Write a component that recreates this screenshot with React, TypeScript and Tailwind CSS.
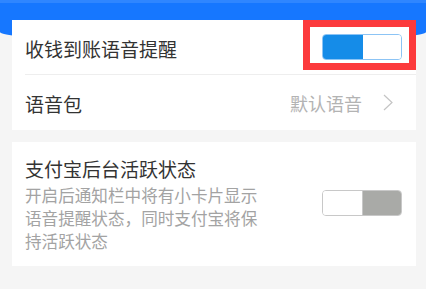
import React from "react";

const font = { fontFamily: '"Noto Sans CJK SC", "Noto Sans", sans-serif' };

export default function App() {
  return (
    <div className="relative w-[426px] h-[289px] overflow-hidden bg-[#f5f5f5]" style={font}>
      <div className="h-[42px] bg-[#1677ff] rounded-b-[50%_10px] border-t-[3px] border-t-[#2f86ff]" />
      <div className="ml-[12px] mr-[10px] -mt-[22px] relative">
        <div className="bg-white">
          <div className="h-[54px] flex items-center justify-between pl-[13px] pr-[14px]">
            <span className="text-[19px] text-[#333333] leading-[26px] mt-[3px]">收钱到账语音提醒</span>
            <div className="w-[80px] h-[26px] flex rounded-[4px] overflow-hidden border border-[#8cc4f5]">
              <div className="w-[40px] bg-[#158ce8]" />
              <div className="flex-1 bg-white" />
            </div>
          </div>
          <div className="ml-[13px] h-px bg-[#eeeeee]" />
          <div className="h-[55px] flex items-center justify-between pl-[13px] pr-[23px]">
            <span className="text-[19px] text-[#333333] leading-[26px] mt-[3px]">语音包</span>
            <div className="flex items-center gap-[21px]">
              <span className="text-[18px] text-[#b3b3b3] leading-[26px]">默认语音</span>
              <svg width="10" height="17" viewBox="0 0 10 17" fill="none">
                <path d="M1 1 L9 8.5 L1 16" stroke="#c4c4c4" strokeWidth="1.2" />
              </svg>
            </div>
          </div>
        </div>
        <div className="mt-[12px] bg-white h-[124px] flex items-center justify-between pl-[13px] pr-[14px]">
          <div className="flex flex-col">
            <span className="text-[19px] text-[#333333] leading-[26px]">支付宝后台活跃状态</span>
            <span className="text-[16.6px] text-[#a3a3a3] leading-[23px] mt-[2px]">
              开启后通知栏中将有小卡片显示
              <br />
              语音提醒状态，同时支付宝将保
              <br />
              持活跃状态
            </span>
          </div>
          <div className="w-[80px] h-[26px] flex rounded-[4px] overflow-hidden border border-[#c8c8c8] self-center -mt-[2px]">
            <div className="w-[40px] bg-white border-r border-[#c8c8c8]" />
            <div className="flex-1 bg-[#a9aaa7]" />
          </div>
        </div>
      </div>
      <div className="absolute left-[303px] top-[20px] w-[113px] h-[50px] border-[7px] border-[#fc3a3c]" />
    </div>
  );
}
